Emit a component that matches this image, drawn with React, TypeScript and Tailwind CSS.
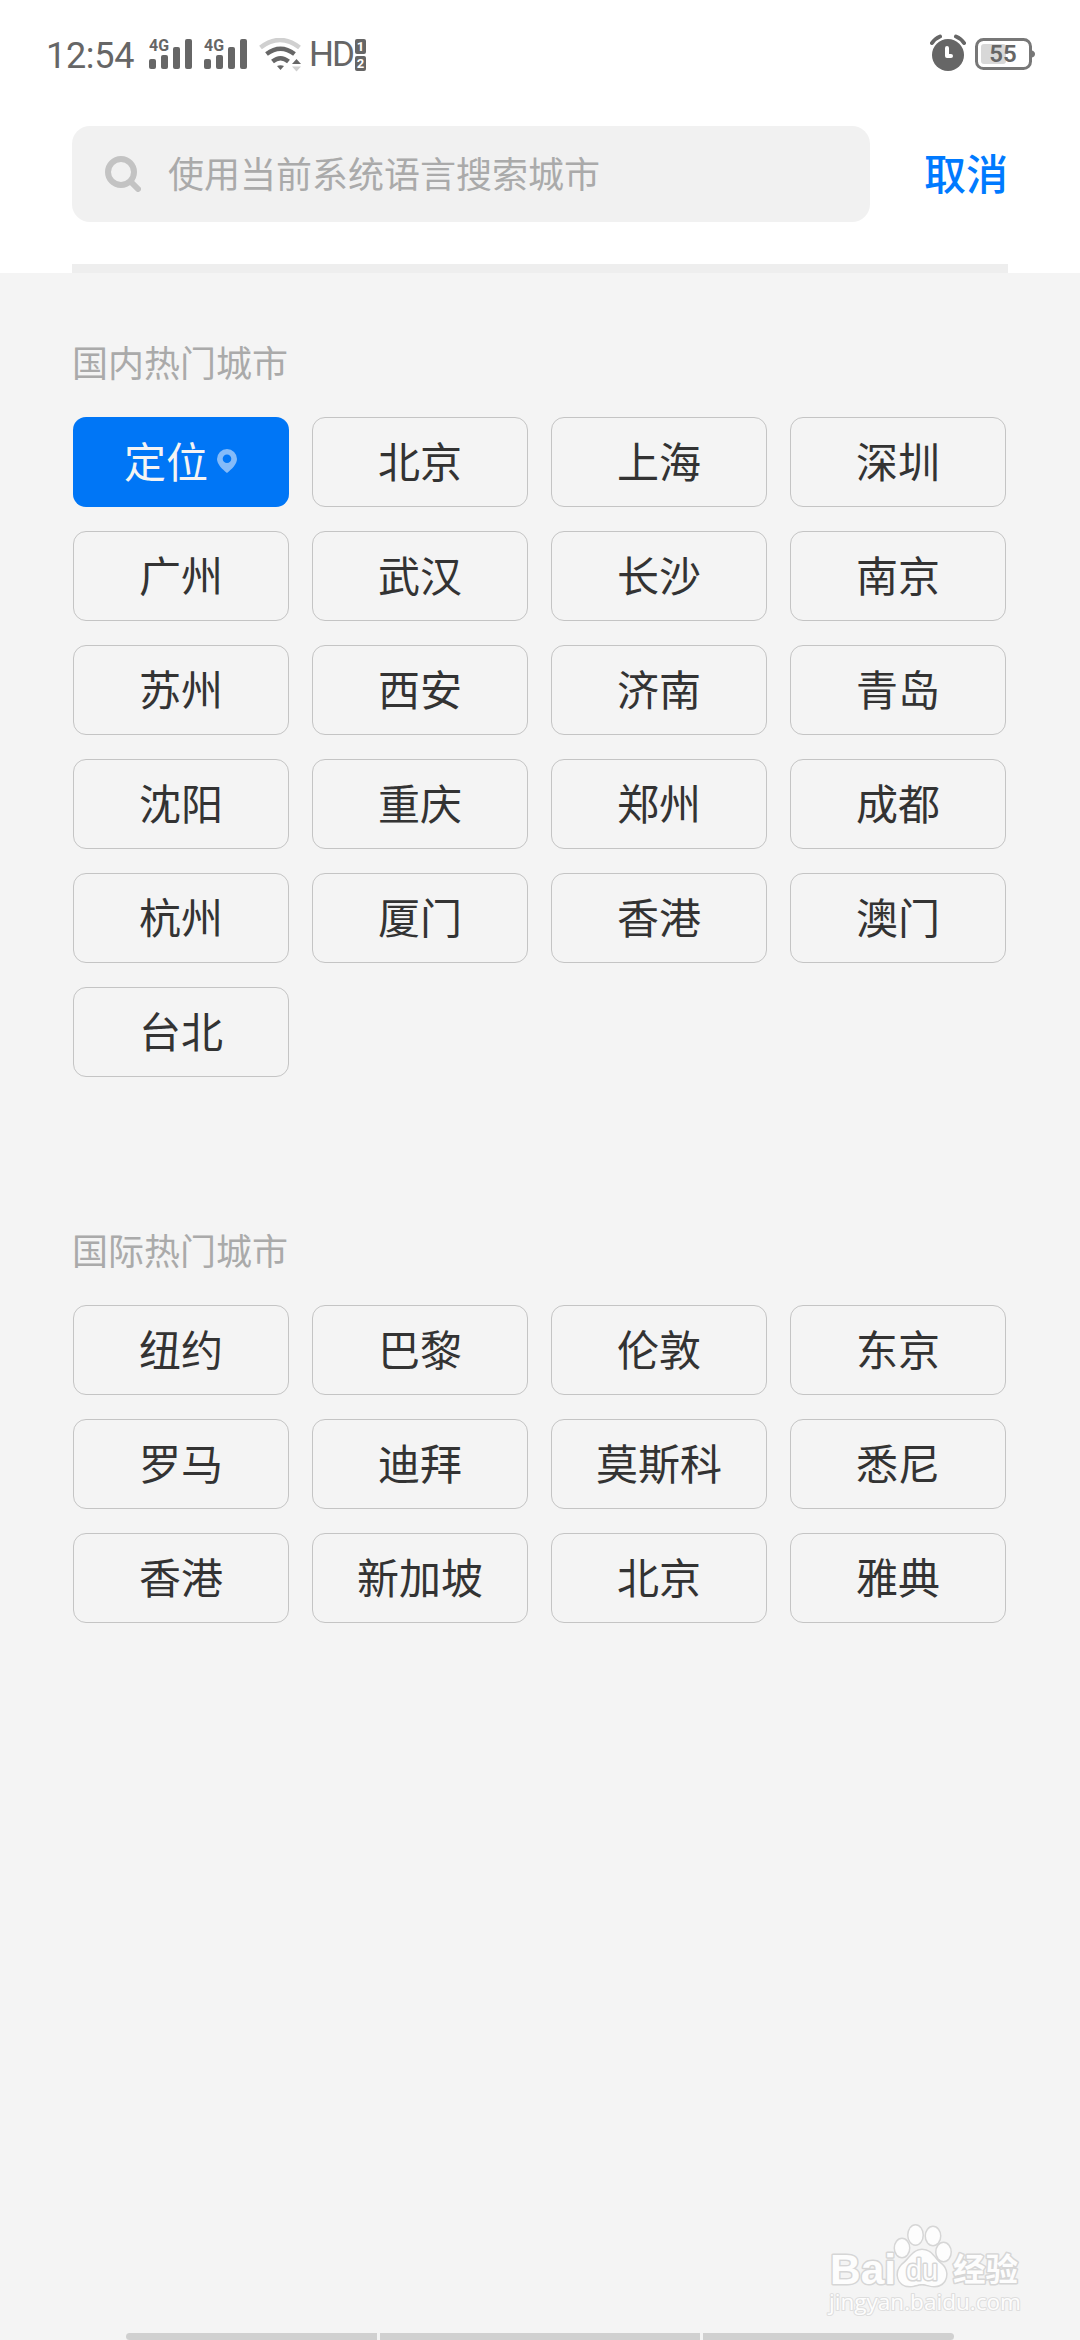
const domesticCities = [
    "北京", "上海", "深圳", "广州", "武汉", "长沙", "南京", "苏州", "西安", "济南",
    "青岛", "沈阳", "重庆", "郑州", "成都", "杭州", "厦门", "香港", "澳门", "台北",
]

const worldCities = [
    "纽约", "巴黎", "伦敦", "东京", "罗马", "迪拜",
    "莫斯科", "悉尼", "香港", "新加坡", "北京", "雅典",
]

const Signal = () => {
    return (
        <svg className="w-[44px] h-[36px]" viewBox="0 -4 44 36" fill="#666666">
            <text x="0" y="12" fontSize="16" fontWeight="700" fontFamily="Roboto, sans-serif" textLength="20" lengthAdjust="spacingAndGlyphs">4G</text>
            <rect x="0" y="20" width="7" height="10" rx="2" />
            <rect x="12" y="16" width="7" height="14" rx="2" />
            <rect x="24" y="8" width="7" height="22" rx="2" />
            <rect x="36" y="0" width="7" height="30" rx="2" />
        </svg>
    )
}

const Wifi = () => {
    return (
        <svg className="w-[42px] h-[34px]" viewBox="0 0 42 34" fill="none" strokeWidth="4.5">
            <path d="M1.5 9.5Q21 -5.5 40.5 9.5" stroke="#d0d0d0" />
            <path d="M7.5 16Q21.5 5.5 35.5 16" stroke="#666666" />
            <path d="M13.5 23.5Q21.5 17 29.5 23.5" stroke="#666666" />
            <path d="M18 28Q21.5 26.5 25 28L21.5 32Z" fill="#666666" />
            <path d="M33 26L37.5 21L42 26Z" fill="#666666" />
            <path d="M33 28.5H42L37.5 33.5Z" fill="#d0d0d0" />
        </svg>
    )
}

const StatusBar = () => {
    return (
        <div className="h-[108px] pl-[46px] pr-[45px] flex items-start justify-between text-[#666666] font-[Roboto,sans-serif]">
            <div className="flex items-start">
                <span className="w-[103px] mt-[36px] text-[36px] leading-[40px] tracking-[-0.3px] whitespace-nowrap">12:54</span>
                <div className="flex gap-[11px] mt-[35px]">
                    <Signal />
                    <Signal />
                </div>
                <div className="ml-[11px] mt-[38px]">
                    <Wifi />
                </div>
                <span className="ml-[8px] mt-[35px] w-[46px] text-[35px] leading-[40px] tracking-[-2px]">HD</span>
                <div className="mt-[39px] flex flex-col gap-[2px] text-white text-[13px] font-bold leading-[15px] text-center">
                    <span className="w-[11px] h-[15px] rounded-[2px] bg-[#666666]">1</span>
                    <span className="w-[11px] h-[15px] rounded-[2px] bg-[#666666]">2</span>
                </div>
            </div>
            <div className="flex items-start">
                <svg className="mt-[34px] w-[36px] h-[38px]" viewBox="0 0 36 38" fill="none">
                    <circle cx="18" cy="21" r="16" fill="#666666" />
                    <path d="M2 9Q5 4.5 10 2.5M34 9Q31 4.5 26 2.5" stroke="#666666" strokeWidth="4" strokeLinecap="round" />
                    <path d="M17 14V22H21" stroke="#ffffff" strokeWidth="4" strokeLinecap="round" strokeLinejoin="round" />
                </svg>
                <svg className="ml-[9px] mt-[37px] w-[60px] h-[34px]" viewBox="0 0 60 34">
                    <rect x="1.5" y="2.5" width="54" height="29" rx="7" fill="none" stroke="#777777" strokeWidth="3" />
                    <path d="M57 13.5Q60 14.5 60 17T57 20.5Z" fill="#777777" />
                    <rect x="6" y="7" width="25" height="20" rx="3" fill="#d8d8d8" />
                    <text x="28" y="25" textAnchor="middle" fontSize="24" fontWeight="600" fill="#666666" fontFamily="Roboto, sans-serif">55</text>
                </svg>
            </div>
        </div>
    )
}

const SearchBar = () => {
    return (
        <div className="px-[72px] pt-[18px]">
            <div className="flex items-center justify-between h-24">
                <div className="w-[798px] h-24 pl-[33px] flex items-center rounded-[18px] bg-[#f1f1f1]">
                    <svg className="w-[36px] h-[36px]" viewBox="0 0 36 36" fill="none" stroke="#c3c3c3" strokeLinecap="round">
                        <circle cx="16" cy="16" r="13" strokeWidth="6" />
                        <path d="M26 26L33 33" strokeWidth="6" />
                    </svg>
                    <span className="ml-[27px] pb-[4px] text-[36px] leading-[52px] text-[#aaaaaa]">使用当前系统语言搜索城市</span>
                </div>
                <button className="pb-[4px] text-[42px] leading-[60px] font-medium text-[#007aff]">取消</button>
            </div>
            <div className="mt-[42px] h-[9px] bg-[#eeeeee]" />
        </div>
    )
}

const cell = "h-[90px] pb-[4px] rounded-[13px] flex items-center justify-center text-[42px] leading-[60px]"

const CityGrid = ({ title, cities, locate }: { title: string; cities: string[]; locate?: boolean }) => {
    return (
        <section>
            <h2 className="-ml-px text-[36px] leading-[52px] text-[#aaaaaa]">{title}</h2>
            <div className="mt-[30px] grid grid-cols-[repeat(4,216px)] gap-x-[23px] gap-y-6">
                {locate && (
                    <button className={`${cell} bg-[#0076f6] text-[#f4f4f4]`}>
                        定位
                        <svg className="ml-[9px] mr-px mt-[2px] w-[20px] h-[24px]" viewBox="0 0 20 24" fill="#84bbf9">
                            <path fillRule="evenodd" d="M10 0a10 10 0 0 1 10 10c0 5-5 10-10 14C5 20 0 15 0 10A10 10 0 0 1 10 0Zm0 5.5a4.3 4.3 0 1 0 0 8.6 4.3 4.3 0 0 0 0-8.6Z" />
                        </svg>
                    </button>
                )}
                {cities.map((city) => (
                    <button key={city} className={`${cell} border border-[#c4c4c4] text-[#333333]`}>{city}</button>
                ))}
            </div>
        </section>
    )
}

const Watermark = () => {
    return (
        <svg className="w-[210px] h-[104px]" viewBox="0 0 210 104" fill="#fdfdfd" stroke="#d6d6d6" strokeWidth="3" paintOrder="stroke" strokeLinejoin="round">
            <text x="8" y="64" fontSize="43" fontWeight="700" fontFamily="Liberation Sans, sans-serif" textLength="66" lengthAdjust="spacingAndGlyphs">Bai</text>
            <ellipse cx="80" cy="28" rx="7" ry="9" />
            <ellipse cx="93.5" cy="15" rx="7" ry="9.5" />
            <ellipse cx="111" cy="16" rx="7" ry="9" />
            <ellipse cx="121.5" cy="32" rx="7" ry="9" />
            <path d="M100 30C110 30 112 39 119 44C128 51 125 66 112 66C106 66 105 64 100 64C95 64 93 66 88 66C75 66 73 52 80 45C88 39 91 30 100 30Z" />
            <text x="84" y="60" fontSize="29" fontFamily="Liberation Sans, sans-serif" textLength="32" lengthAdjust="spacingAndGlyphs">du</text>
            <text x="131" y="61" fontSize="32" fontWeight="700" fontFamily="Noto Sans CJK SC, sans-serif" textLength="65" lengthAdjust="spacingAndGlyphs">经验</text>
            <text x="7" y="90" fontSize="21" fontFamily="Open Sans, sans-serif" stroke="#dedede" strokeWidth="2" textLength="192" lengthAdjust="spacingAndGlyphs">jingyan.baidu.com</text>
        </svg>
    )
}

const App = () => {
    return (
        <div className="w-[1080px] h-[2340px] flex flex-col overflow-hidden bg-[#f4f4f4] font-['Noto_Sans_CJK_SC',sans-serif]">
            <header className="h-[273px] shrink-0 bg-white">
                <StatusBar />
                <SearchBar />
            </header>
            <main className="flex-1 px-[73px] pt-[62px] flex flex-col gap-[146px]">
                <CityGrid title="国内热门城市" cities={domesticCities} locate />
                <CityGrid title="国际热门城市" cities={worldCities} />
            </main>
            <footer className="flex flex-col">
                <div className="pl-[822px] pb-[9px]">
                    <Watermark />
                </div>
                <div className="mx-[126px] h-[7px] flex gap-[3px]">
                    <div className="w-[251px] rounded-l-[4px] bg-[#d0d0d0]" />
                    <div className="flex-1 bg-[#d0d0d0]" />
                    <div className="w-[251px] rounded-r-[4px] bg-[#d0d0d0]" />
                </div>
            </footer>
        </div>
    )
}

export default App
